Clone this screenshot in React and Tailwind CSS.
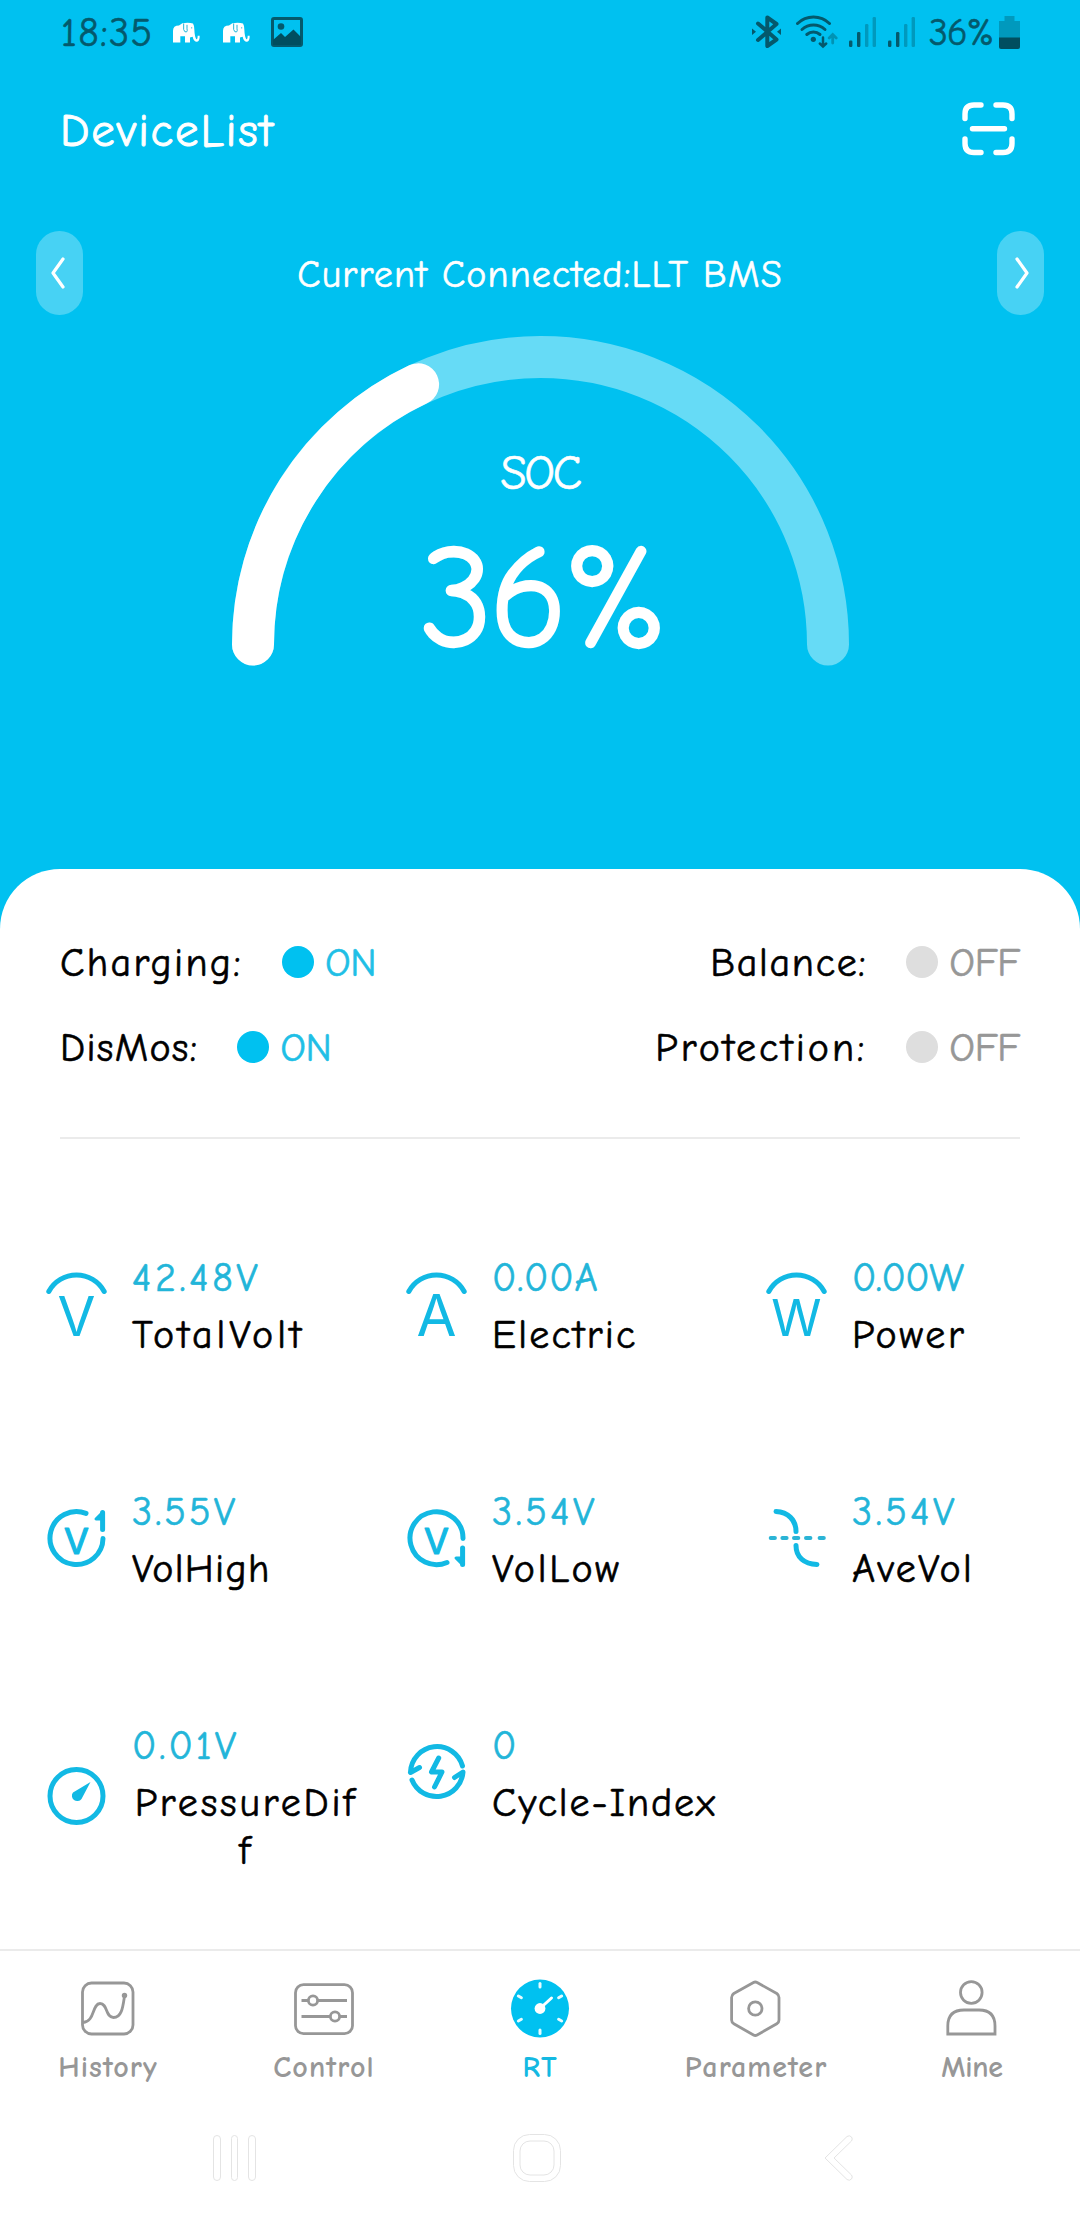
const BluetoothIcon = () => (
  <svg width="30" height="34" viewBox="751 15 30 34" fill="none">
    <path d="M757 23.5L775.5 39.5L766.3 46V17.5L775.5 24L757 40" stroke="#04596c" strokeWidth="4" strokeLinejoin="round" strokeLinecap="round" />
    <path d="M751 28.5L755 31.8L751 35ZM780 28.5L776 31.8L780 35Z" fill="#04596c" />
  </svg>
);

const WifiIcon = () => (
  <svg width="42" height="34" viewBox="795 14 42 34" fill="none">
    <g stroke="#04596c" strokeWidth="3" strokeLinecap="round">
      <path d="M796.5 22.5A23 23 0 0 1 828.5 22.5" />
      <path d="M801 28.5A17 17 0 0 1 824 28.5" />
      <path d="M805.8 33.5A10 10 0 0 1 819 33.5" />
      <path d="M822 36.5V45M818.8 42.5L822 45.5L825.2 42.5" strokeWidth="2.5" />
    </g>
    <circle cx="812.3" cy="38.3" r="2.6" fill="#04596c" />
    <path d="M831.7 42V34M828.2 37L831.7 33.5L835.2 37" stroke="#0093b4" strokeWidth="2.8" strokeLinecap="round" />
  </svg>
);

const SignalIcon = () => (
  <svg width="28" height="30" viewBox="0 0 28 30">
    <rect x="0" y="23.5" width="3.4" height="6.5" rx="1.2" fill="#04596c" />
    <rect x="8" y="15" width="3.4" height="15" rx="1.2" fill="#04596c" />
    <rect x="16" y="7" width="3.4" height="23" rx="1.2" fill="#0099bd" />
    <rect x="23.6" y="0" width="3.4" height="30" rx="1.2" fill="#0099bd" />
  </svg>
);

const BatteryIcon = () => (
  <svg width="21" height="33" viewBox="0 0 21 33">
    <path d="M5.5 0H15.5V5H21V22H0V5H5.5Z" fill="#0099bd" />
    <path d="M0 21.5H21V31Q21 33 19 33H2Q0 33 0 31Z" fill="#004e5f" />
  </svg>
);

const ElephantIcon = () => (
  <svg width="27" height="21" viewBox="40 38 81 62">
    <path d="M40 99V64Q40 48 58 48L68 41Q88 38 100 42Q104 48 104 60Q105 82 110 89Q114 90 114 79H120Q121 98 109 97Q101 94 99 82L91 84V99H76V80H62V99Z" fill="#fff" />
    <path d="M72 42V60Q75 70 81 67Q84 64 82 58V46" fill="none" stroke="#22b4d8" strokeWidth="3" />
    <circle cx="96" cy="55" r="2" fill="#22b4d8" />
  </svg>
);

const PictureIcon = () => (
  <svg width="32" height="30" viewBox="0 0 32 30">
    <rect x="1.5" y="1.5" width="29" height="27" rx="1.5" fill="none" stroke="#04596c" strokeWidth="3" />
    <circle cx="10" cy="9.5" r="3.3" fill="#04596c" />
    <path d="M2 23L10 16L14 20L22.5 12.5L30 20V28H2Z" fill="#004e5f" />
  </svg>
);

const ScanIcon = () => (
  <svg width="53" height="54" viewBox="0 0 53 54" fill="none" stroke="#fff" strokeWidth="5.4" strokeLinecap="round">
    <path d="M19 3H12Q3 3 3 12V16.5M34 3H41Q50 3 50 12V16.5M19 50.5H12Q3 50.5 3 41.5V37M34 50.5H41Q50 50.5 50 41.5V37M10.5 26.7H42.5" />
  </svg>
);

// voltage / current / power meters share the arc on top
const MeterIcon = ({ letter, size }) => (
  <svg className="overflow-visible" width="72" height="72" viewBox="0 0 72 72" fill="none">
    <path d="M7.8 23.5A31.5 31.5 0 0 1 63.2 23.5" stroke="#12b9e4" strokeWidth="5" strokeLinecap="round" />
    <text x="35.5" y="67.5" textAnchor="middle" fontFamily="Inter, sans-serif" fontSize={size} fill="#12b9e4">{letter}</text>
  </svg>
);

const SmallV = () => (
  <text x="35.5" y="52" textAnchor="middle" fontFamily="Inter, sans-serif" fontSize="36" fill="#12b9e4" stroke="#12b9e4" strokeWidth="1.2" strokeLinejoin="round">V</text>
);

const HighIcon = () => (
  <svg width="72" height="72" viewBox="0 0 72 72" fill="none" stroke="#12b9e4" strokeWidth="5" strokeLinecap="round" strokeLinejoin="round">
    <path d="M45 11.3A26.5 26.5 0 1 0 62 36.5M61.6 10.5V27.5" />
    <path d="M61 11L55 17H61Z" fill="#12b9e4" strokeWidth="3" />
    <SmallV />
  </svg>
);

const LowIcon = () => (
  <svg width="72" height="72" viewBox="0 0 72 72" fill="none" stroke="#12b9e4" strokeWidth="5" strokeLinecap="round" strokeLinejoin="round">
    <path d="M62 36.5A26.5 26.5 0 1 0 46 60.5M61.6 46V62.5" />
    <path d="M61 62L55 56H61Z" fill="#12b9e4" strokeWidth="3" />
    <SmallV />
  </svg>
);

const AverageIcon = () => (
  <svg width="72" height="72" viewBox="0 0 72 72" fill="none" stroke="#12b9e4" strokeWidth="5" strokeLinecap="round">
    <path d="M15 9.5C27 10 35 18 35 29.5M35 43.5C35 55 43 62 56 62.5" />
    <path d="M9.7 36H13.9M21.4 36H25.6M33 36H37.3M45 36H49.4M58.6 36H62.8" stroke="#2bb4d6" strokeWidth="4" />
  </svg>
);

const DiffIcon = () => (
  <svg width="72" height="72" viewBox="0 0 72 72" fill="none">
    <circle cx="35.5" cy="36" r="26.5" stroke="#12b9e4" strokeWidth="5" />
    <path d="M49.5 22L40.5 39A5.3 5.3 0 1 1 32 32.5Z" fill="#12b9e4" />
  </svg>
);

const CycleIcon = () => (
  <svg width="72" height="72" viewBox="0 0 72 72" fill="none" stroke="#12b9e4" strokeWidth="5" strokeLinecap="round" strokeLinejoin="round">
    <path d="M9.5 36A26.5 26.5 0 0 1 61.5 30M9.5 36.5L18.5 31.5M11 44A26.5 26.5 0 0 0 62 36L53.5 41.5M37.7 22L30.5 36H41L33.5 51" />
  </svg>
);

const HistoryIcon = () => (
  <svg width="60" height="60" viewBox="0 0 60 60" fill="none" stroke="#979797" strokeWidth="2.8">
    <rect x="4.5" y="5" width="50.5" height="51" rx="9" />
    <path d="M5 44.5C17 44 14 25.5 22 25.5S27 39.5 35.5 39.5S45 28 46.5 18" />
    <circle cx="46.5" cy="17.5" r="2.7" fill="#979797" stroke="none" />
  </svg>
);

const ControlIcon = () => (
  <svg width="60" height="60" viewBox="0 0 60 60" fill="none" stroke="#979797" strokeWidth="2.8">
    <rect x="1.5" y="6.7" width="57" height="49" rx="8" />
    <path d="M7.5 22.5H53M7.5 38.5H53" />
    <circle cx="19" cy="22.5" r="4.6" fill="#fff" />
    <circle cx="41" cy="38.5" r="4.6" fill="#fff" />
  </svg>
);

const RtIcon = () => (
  <svg width="60" height="60" viewBox="0 0 60 60">
    <circle cx="30" cy="30.5" r="29" fill="#00c1f0" />
    {[0, 60, 120, 180, 240, 300].map((a) => (
      <path key={a} d="M30 5.5V9" stroke="#e6fbff" strokeWidth="3" strokeLinecap="round" transform={`rotate(${a} 30 30.5)`} />
    ))}
    <path d="M30 30.5L41.5 20" stroke="#fff" strokeWidth="3" strokeLinecap="round" />
    <circle cx="30" cy="30.5" r="5.4" fill="#fff" />
  </svg>
);

const ParameterIcon = () => (
  <svg width="60" height="60" viewBox="0 0 60 60" fill="none" stroke="#979797" strokeWidth="2.8" strokeLinejoin="round">
    <path d="M27.5 4.5Q29.3 3.5 31.1 4.5L50.8 15.5Q53 17 53 19.5V42Q53 44.5 50.8 45.8L31.1 57Q29.3 58 27.5 57L7.8 45.8Q5.6 44.5 5.6 42V19.5Q5.6 17 7.8 15.5Z" />
    <circle cx="29.3" cy="30.5" r="6.7" />
  </svg>
);

const MineIcon = () => (
  <svg width="60" height="60" viewBox="0 0 60 60" fill="none" stroke="#979797" strokeWidth="2.8">
    <circle cx="29.3" cy="14.5" r="10.8" />
    <path d="M5.8 56V48Q5.8 32 22 32H37Q53 32 53 48V56Z" />
  </svg>
);

const metrics = [
  { value: '42.48V', label: 'TotalVolt', icon: <MeterIcon letter="V" size={55} />, valueClass: 'tracking-[3.6px]', labelClass: 'tracking-[3.9px]' },
  { value: '0.00A', label: 'Electric', icon: <MeterIcon letter="A" size={58} />, valueClass: 'tracking-[0.8px]', labelClass: 'tracking-[2.2px]' },
  { value: '0.00W', label: 'Power', icon: <MeterIcon letter="W" size={51} />, valueClass: 'tracking-[-0.5px]', labelClass: 'tracking-[2.8px]' },
  { value: '3.55V', label: 'VolHigh', icon: <HighIcon />, valueClass: 'tracking-[3px]', labelClass: 'tracking-[1.3px]' },
  { value: '3.54V', label: 'VolLow', icon: <LowIcon />, valueClass: 'tracking-[3.4px]', labelClass: 'tracking-[2.8px]' },
  { value: '3.54V', label: 'AveVol', icon: <AverageIcon />, valueClass: 'tracking-[3.4px]', labelClass: 'tracking-[2.3px]' },
  { value: '0.01V', label: 'PressureDiff', icon: <DiffIcon />, valueClass: 'tracking-[3px]', labelClass: 'tracking-[2.8px]' },
  { value: '0', label: 'Cycle-Index', icon: <CycleIcon />, valueClass: 'tracking-normal', labelClass: 'tracking-[1.9px]' },
];

const tabs = [
  { label: 'History', icon: <HistoryIcon />, labelClass: 'tracking-[1.1px]' },
  { label: 'Control', icon: <ControlIcon />, labelClass: 'tracking-[1.1px]' },
  { label: 'RT', icon: <RtIcon />, active: true, labelClass: 'tracking-[1px]' },
  { label: 'Parameter', icon: <ParameterIcon />, labelClass: 'tracking-[1.1px]' },
  { label: 'Mine', icon: <MineIcon />, labelClass: 'tracking-[-0.3px]' },
];

const Switch = ({ label, labelClass, on }) => (
  <div className="flex h-[42px] items-center text-[40px] leading-[42px]">
    <span className={`pt-[2px] text-black ${labelClass}`}>{label}</span>
    <span className={`ml-[39px] h-8 w-8 rounded-full ${on ? 'bg-[#00c1f0]' : 'bg-[#dedede]'}`}></span>
    <span className={`ml-[11px] pt-[2px] tracking-[-0.4px] ${on ? 'text-[#1fbfe6]' : 'text-[#979797]'}`}>{on ? 'ON' : 'OFF'}</span>
  </div>
);

const Gauge = ({ percent }) => {
  const angle = (percent / 100) * Math.PI;
  const x = 308.5 - 287.5 * Math.cos(angle);
  const y = 308.5 - 287.5 * Math.sin(angle);
  return (
    <div className="relative mx-auto mt-[21px] h-[330px] w-[617px]">
      <svg width="617" height="330" viewBox="0 0 617 330" fill="none" strokeWidth="42" strokeLinecap="round">
        <path d="M21 308.5A287.5 287.5 0 0 1 596 308.5" stroke="#66dbf6" />
        <path d={`M21 308.5A287.5 287.5 0 0 1 ${x} ${y}`} stroke="#fff" />
      </svg>
      <div className="absolute inset-x-0 top-[108px] flex flex-col items-center text-white">
        <span className="text-[48px] leading-[60px] tracking-[-2.5px]">SOC</span>
        <span className="mt-[15px] pl-[4px] text-[145px] leading-[160px] tracking-[-4px] [-webkit-text-stroke:2.4px]">{percent}%</span>
      </div>
    </div>
  );
};

const App = () => {
  return (
    <div className="h-[2220px] w-[1080px] overflow-hidden bg-[#00c1f0] font-['Comic_Neue','Open_Sans',sans-serif] [-webkit-text-stroke:0.6px]">
      {/* Status bar */}
      <div className="flex h-[64px] items-center justify-between pr-[60px] pl-[61px] text-[#04596c]">
        <div className="flex items-center">
          <span className="w-[112px] pt-[2px] text-[40px] tracking-[1.4px]">18:35</span>
          <ElephantIcon />
          <span className="w-[23px]"></span>
          <ElephantIcon />
          <span className="w-[21px]"></span>
          <PictureIcon />
        </div>
        <div className="flex items-center">
          <BluetoothIcon />
          <span className="w-[14px]"></span>
          <WifiIcon />
          <span className="w-[11px]"></span>
          <SignalIcon />
          <span className="w-[11px]"></span>
          <SignalIcon />
          <span className="ml-[13px] pt-[2px] text-[38px] tracking-[-1px]">36%</span>
          <span className="w-[6px]"></span>
          <BatteryIcon />
        </div>
      </div>

      {/* Header */}
      <div className="flex h-[132px] items-center justify-between pr-[65px] pl-[60px] text-white">
        <h1 className="pt-[3px] text-[47px] tracking-[1.8px] [-webkit-text-stroke:0.9px]">DeviceList</h1>
        <div className="pb-[2px]">
          <ScanIcon />
        </div>
      </div>

      {/* Connected device */}
      <div className="mt-[35px] flex h-[84px] items-center justify-between px-[36px] text-white">
        <button type="button" className="flex h-[84px] w-[47px] items-center justify-center rounded-full bg-white/28 pr-1">
          <svg width="14" height="34" viewBox="0 0 14 34" fill="none" stroke="#fff" strokeWidth="3.2" strokeLinecap="round" strokeLinejoin="round">
            <path d="M12 3L2 17L12 31" />
          </svg>
        </button>
        <span className="pt-[5px] text-[38px] tracking-[1.1px]">Current Connected:LLT BMS</span>
        <button type="button" className="flex h-[84px] w-[47px] items-center justify-center rounded-full bg-white/28 pl-1">
          <svg width="14" height="34" viewBox="0 0 14 34" fill="none" stroke="#fff" strokeWidth="3.2" strokeLinecap="round" strokeLinejoin="round">
            <path d="M2 3L12 17L2 31" />
          </svg>
        </button>
      </div>

      <Gauge percent={36} />

      {/* Panel */}
      <div className="mt-[203px] h-[1351px] rounded-t-[60px] bg-white">
        <div className="h-[1080px]">
          <div className="mx-[60px] flex h-[270px] justify-between border-b-2 border-[#ebebeb] pt-[72px]">
            <div className="flex flex-col items-start gap-[43px]">
              <Switch label="Charging:" labelClass="tracking-[2.3px]" on />
              <Switch label="DisMos:" labelClass="tracking-[1.3px]" on />
            </div>
            <div className="flex flex-col items-end gap-[43px]">
              <Switch label="Balance:" labelClass="tracking-[1.7px]" />
              <Switch label="Protection:" labelClass="tracking-[3px]" />
            </div>
          </div>

          <div className="grid grid-cols-3 items-start gap-y-[125px] pt-[110px]">
            {metrics.map((m) => (
              <div key={m.label} className="flex items-center pl-[41px]">
                <div className="shrink-0">{m.icon}</div>
                <div className="mt-[1px] -mb-[1px] ml-[19px] flex w-[228px] flex-col items-start">
                  <span className={`text-[40px] leading-[56px] text-[#22b5d9] ${m.valueClass}`}>{m.value}</span>
                  <span className={`mt-[5px] text-center text-[40px] leading-[48px] break-all text-black ${m.labelClass}`}>{m.label}</span>
                </div>
              </div>
            ))}
          </div>
        </div>

        {/* Tabs */}
        <div className="grid h-[161px] grid-cols-5 border-t-2 border-[#ebebeb] pt-[27px] [-webkit-text-stroke:0px]">
          {tabs.map((t) => (
            <div key={t.label} className="flex flex-col items-center">
              {t.icon}
              <span className={`mt-[10px] text-[30px] leading-[40px] font-bold ${t.labelClass} ${t.active ? 'text-[#14b9e2]' : 'text-[#979797]'}`}>{t.label}</span>
            </div>
          ))}
        </div>

        {/* System navigation */}
        <div className="flex h-[96px] items-center justify-between pr-[217px] pl-[211px]">
          <svg width="48" height="48" viewBox="0 0 48 48" fill="none" stroke="#e4e4e4">
            <rect x="2.5" y="1.5" width="7" height="45" rx="3.5" />
            <rect x="20.5" y="1.5" width="6" height="45" rx="3" />
            <rect x="37.5" y="1.5" width="7" height="45" rx="3.5" />
          </svg>
          <svg width="48" height="48" viewBox="0 0 48 48" fill="none" stroke="#e4e4e4">
            <rect x="0.5" y="0.5" width="47" height="47" rx="16" />
            <rect x="7" y="7" width="34" height="34" rx="10" />
          </svg>
          <svg width="48" height="48" viewBox="0 0 48 48" fill="none" stroke="#e4e4e4">
            <path d="M10 24L32 2.5Q34.5 0.8 36.5 3Q38 5 36.5 7L19 24L36.5 41Q38 43 36.5 45Q34.5 47.2 32 45.5Z" />
          </svg>
        </div>
      </div>
    </div>
  );
};

export default App;
